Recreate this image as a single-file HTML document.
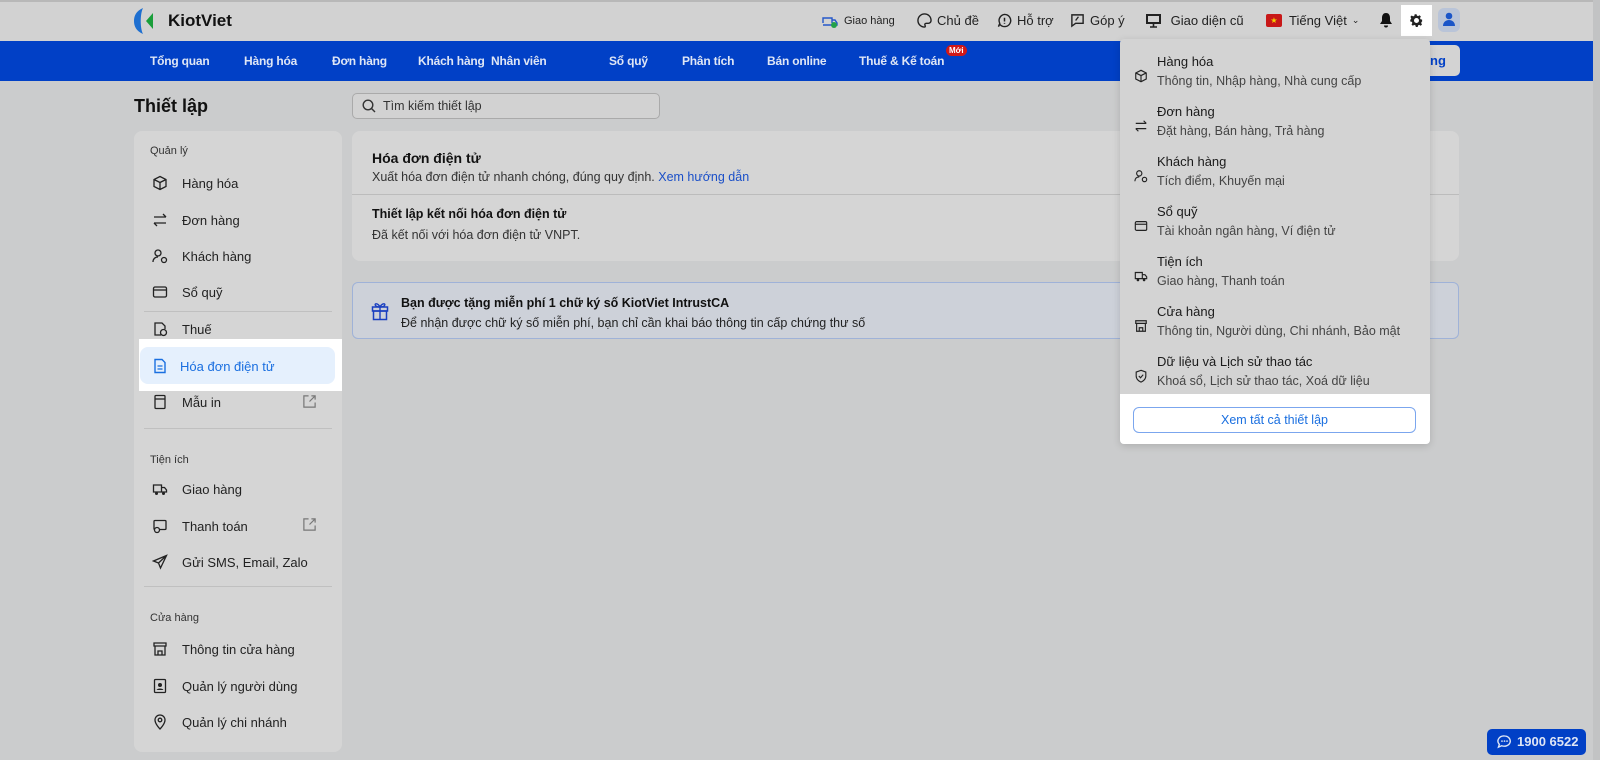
<!DOCTYPE html>
<html><head><meta charset="utf-8">
<style>
*{box-sizing:border-box;margin:0;padding:0}
body{width:1600px;height:760px;overflow:hidden;background:#cbcccd;font-family:"Liberation Sans",Arial,sans-serif;color:#1a1a1a;position:relative;font-size:13px}
.a{position:absolute}
.top{left:0;top:0;width:1600px;height:41px;background:#d2d2d2;border-top:2px solid #b8b8b8}
.nav{left:0;top:41px;width:1600px;height:40px;background:#0140c6}
.nav span{position:absolute;top:13px;color:#dfe6f5;font-weight:bold;font-size:12px;letter-spacing:-0.2px}
.hd{top:13px;font-size:13px;color:#222;display:flex;align-items:center;gap:5px}
.side{left:134px;top:131px;width:208px;height:621px;background:#d5d5d5;border-radius:8px}
.si{position:absolute;left:18px;font-size:13px;color:#222;display:flex;align-items:center;gap:14px}
.si svg{width:16px;height:16px}
.sec{position:absolute;left:16px;font-size:11px;color:#333}
.hr{position:absolute;left:10px;width:188px;height:1px;background:#c0c0c0}
.card{left:352px;top:131px;width:1107px;height:130px;background:#d5d5d5;border-radius:8px}
.dd{left:1120px;top:39px;width:310px;height:405px;background:#d3d3d3;border-radius:4px;box-shadow:0 2px 8px rgba(0,0,0,.15);overflow:hidden}
.di{position:absolute;left:37px;font-size:13px;color:#1a1a1a}
.di small{display:block;font-size:12.5px;color:#444;margin-top:5px}
.dic{position:absolute;left:14px;width:14px;height:14px}
</style></head><body>
<div class="a top"></div>
<svg class="a" style="left:133px;top:8px" width="30" height="26" viewBox="0 0 30 26"><path d="M10 0C3 3 1 8 1 13s2 10 9 13C7 20 7 6 10 0z" fill="#1e6fd0"/><path d="M13 13l7-8v16z" fill="#1a9e3a"/></svg>
<div class="a" style="left:168px;top:11px;font-size:17px;font-weight:bold;color:#111">KiotViet</div>
<div class="a hd" style="left:821px"><svg width="18" height="16" viewBox="0 0 18 16"><path d="M2 10V5h9v5M11 7h3l2 3v2H2" fill="none" stroke="#2458c9" stroke-width="1.4"/><circle cx="13" cy="12" r="3" fill="#23a04a"/></svg><span style="font-size:11px">Giao hàng</span></div>
<div class="a hd" style="left:917px"><svg width="15" height="15" viewBox="0 0 16 16"><path d="M8 1a7 7 0 100 14c1 0 1-1 .5-2s0-2 1.5-2h2a3 3 0 003-3C15 4 12 1 8 1z" fill="none" stroke="#222" stroke-width="1.5"/></svg>Chủ đề</div>
<div class="a hd" style="left:997px"><svg width="15" height="15" viewBox="0 0 16 16"><path d="M8 1.5a6.5 6.5 0 11-5 10.5L1.5 14.5 3 11A6.5 6.5 0 018 1.5z" fill="none" stroke="#222" stroke-width="1.5"/><path d="M8 5v4M8 10.5v1" stroke="#222" stroke-width="1.6"/></svg>Hỗ trợ</div>
<div class="a hd" style="left:1070px"><svg width="15" height="15" viewBox="0 0 16 16"><path d="M2 2h12v9H6l-4 3z" fill="none" stroke="#222" stroke-width="1.5"/><path d="M9 4l-3 4" stroke="#222" stroke-width="1.4"/></svg>Góp ý</div>
<div class="a hd" style="left:1145px"><svg width="17" height="15" viewBox="0 0 17 15"><rect x="1" y="1" width="15" height="10" fill="#222"/><rect x="3" y="3" width="11" height="6" fill="#d2d2d2"/><path d="M5 14h7M8.5 11v3" stroke="#222" stroke-width="1.6"/></svg>&nbsp;Giao diện cũ</div>
<div class="a" style="left:1266px;top:14px;width:16px;height:13px;background:#c81818;border-radius:2px;color:#f5d000;font-size:8px;text-align:center;line-height:13px">★</div>
<div class="a hd" style="left:1289px">Tiếng Việt <span style="font-size:9px">⌄</span></div>
<svg class="a" style="left:1379px;top:12px" width="14" height="16" viewBox="0 0 14 16"><path d="M7 1c3 0 4 2.5 4 5v3l2 3H1l2-3V6c0-2.5 1-5 4-5zM5 13.5h4a2 2 0 01-4 0z" fill="#111"/></svg>
<div class="a" style="left:1401px;top:5px;width:31px;height:31px;background:#fff"></div>
<svg class="a" style="left:1409px;top:13px" width="15" height="15" viewBox="0 0 24 24"><path d="M12 8a4 4 0 100 8 4 4 0 000-8zm9 5.5v-3l-2.6-.6-.8-1.9 1.4-2.3-2.1-2.1-2.3 1.4-1.9-.8L12.1 2h-3l-.6 2.6-1.9.8-2.3-1.4-2.1 2.1 1.4 2.3-.8 1.9L2 10.5v3l2.6.6.8 1.9-1.4 2.3 2.1 2.1 2.3-1.4 1.9.8.6 2.6h3l.6-2.6 1.9-.8 2.3 1.4 2.1-2.1-1.4-2.3.8-1.9z" fill="#222" fill-rule="evenodd"/></svg>
<div class="a" style="left:1438px;top:8px;width:22px;height:24px;background:#b9c4d8;border-radius:6px"></div>
<svg class="a" style="left:1443px;top:12px" width="12" height="15" viewBox="0 0 12 15"><circle cx="6" cy="4" r="3.3" fill="#1a55c8"/><path d="M0 14c0-4 3-6 6-6s6 2 6 6z" fill="#1a55c8"/></svg>
<div class="a nav">
<span style="left:150px">Tổng quan</span><span style="left:244px">Hàng hóa</span><span style="left:332px">Đơn hàng</span><span style="left:418px">Khách hàng</span><span style="left:491px">Nhân viên</span><span style="left:609px">Sổ quỹ</span><span style="left:682px">Phân tích</span><span style="left:767px">Bán online</span><span style="left:859px">Thuế &amp; Kế toán</span>
<div style="position:absolute;left:946px;top:4px;background:#d01818;color:#fff;font-size:8px;font-weight:bold;border-radius:7px;padding:1px 3px">Mới</div>
<div style="position:absolute;left:1420px;top:4px;width:40px;height:31px;background:#d3d3d3;border-radius:5px;color:#0140c6;font-weight:bold;font-size:13px;line-height:31px;padding-left:10px">ng</div>
</div>
<div class="a" style="left:134px;top:96px;font-size:18px;font-weight:bold;color:#111">Thiết lập</div>
<div class="a" style="left:352px;top:93px;width:308px;height:26px;border:1px solid #aaa;border-radius:5px;background:#d2d2d2"></div>
<svg class="a" style="left:362px;top:99px" width="14" height="14" viewBox="0 0 14 14"><circle cx="6" cy="6" r="4.8" fill="none" stroke="#333" stroke-width="1.4"/><path d="M9.5 9.5L13 13" stroke="#333" stroke-width="1.4"/></svg>
<div class="a" style="left:383px;top:99px;font-size:12.5px;color:#333">Tìm kiếm thiết lập</div>
<div class="a side">
<div class="sec" style="top:14px">Quản lý</div>
<div class="si" style="top:44px"><svg viewBox="0 0 16 16"><path d="M8 1.5l6 3v7l-6 3-6-3v-7zM2 4.5l6 3 6-3M8 7.5v7" fill="none" stroke="#222" stroke-width="1.3"/></svg>Hàng hóa</div>
<div class="si" style="top:81px"><svg viewBox="0 0 16 16"><path d="M2 5h12M11 2l3 3M14 11H2M5 14l-3-3" fill="none" stroke="#222" stroke-width="1.3"/></svg>Đơn hàng</div>
<div class="si" style="top:117px"><svg viewBox="0 0 16 16"><circle cx="6" cy="5" r="3" fill="none" stroke="#222" stroke-width="1.3"/><path d="M1 14c0-3 2-5 5-5" fill="none" stroke="#222" stroke-width="1.3"/><circle cx="12" cy="12" r="2.5" fill="none" stroke="#222" stroke-width="1.3"/></svg>Khách hàng</div>
<div class="si" style="top:153px"><svg viewBox="0 0 16 16"><rect x="1.5" y="3" width="13" height="10" rx="1.5" fill="none" stroke="#222" stroke-width="1.3"/><path d="M1.5 6h13" stroke="#222" stroke-width="1.3"/></svg>Sổ quỹ</div>
<div class="hr" style="top:180px"></div>
<div class="si" style="top:190px"><svg viewBox="0 0 16 16"><path d="M9 14H3V2h7l3 3v3" fill="none" stroke="#222" stroke-width="1.3"/><circle cx="11.5" cy="11.5" r="3" fill="none" stroke="#222" stroke-width="1.3"/></svg>Thuế</div>
<div class="si" style="top:263px"><svg viewBox="0 0 16 16"><rect x="3" y="1.5" width="10" height="13" rx="1" fill="none" stroke="#222" stroke-width="1.3"/><path d="M3 5h10" stroke="#222" stroke-width="1.3"/></svg>Mẫu in</div>
<svg style="position:absolute;left:168px;top:263px" width="15" height="15" viewBox="0 0 16 16"><path d="M7 2H2v12h12V9M10 2h4v4M14 2L8 8" fill="none" stroke="#777" stroke-width="1.3"/></svg>
<div class="hr" style="top:297px"></div>
<div class="sec" style="top:323px">Tiện ích</div>
<div class="si" style="top:350px"><svg viewBox="0 0 16 16"><path d="M1.5 4h8v7h-8zM9.5 6.5h3l2 2.5v2h-5" fill="none" stroke="#222" stroke-width="1.3"/><circle cx="4.5" cy="12.5" r="1.5" fill="#222"/><circle cx="11.5" cy="12.5" r="1.5" fill="#222"/></svg>Giao hàng</div>
<div class="si" style="top:387px"><svg viewBox="0 0 16 16"><rect x="2" y="2.5" width="12" height="9" rx="1" fill="none" stroke="#222" stroke-width="1.3"/><circle cx="5" cy="12" r="2.5" fill="#d5d5d5" stroke="#222" stroke-width="1.3"/></svg>Thanh toán</div>
<svg style="position:absolute;left:168px;top:386px" width="15" height="15" viewBox="0 0 16 16"><path d="M7 2H2v12h12V9M10 2h4v4M14 2L8 8" fill="none" stroke="#777" stroke-width="1.3"/></svg>
<div class="si" style="top:423px"><svg viewBox="0 0 16 16"><path d="M14.5 1.5L1.5 7l5 2 2 5zM6.5 9l8-7.5" fill="none" stroke="#222" stroke-width="1.3"/></svg>Gửi SMS, Email, Zalo</div>
<div class="hr" style="top:455px"></div>
<div class="sec" style="top:481px">Cửa hàng</div>
<div class="si" style="top:510px"><svg viewBox="0 0 16 16"><path d="M2 2h12v3H2zM3 5v9h10V5M6 14v-4h4v4" fill="none" stroke="#222" stroke-width="1.3"/></svg>Thông tin cửa hàng</div>
<div class="si" style="top:547px"><svg viewBox="0 0 16 16"><rect x="2.5" y="1.5" width="11" height="13" rx="1" fill="none" stroke="#222" stroke-width="1.3"/><circle cx="8" cy="7" r="2" fill="#222"/><path d="M4.5 12c1-2 6-2 7 0z" fill="#222"/></svg>Quản lý người dùng</div>
<div class="si" style="top:583px"><svg viewBox="0 0 16 16"><path d="M8 15s5-5 5-9a5 5 0 00-10 0c0 4 5 9 5 9z" fill="none" stroke="#222" stroke-width="1.3"/><circle cx="8" cy="6" r="1.8" fill="none" stroke="#222" stroke-width="1.3"/></svg>Quản lý chi nhánh</div>
</div>
<div class="a" style="left:139px;top:339px;width:203px;height:52px;background:#fff"></div>
<div class="a" style="left:140px;top:347px;width:195px;height:37px;background:#e5f0fd;border-radius:8px"></div>
<svg class="a" style="left:152px;top:358px" width="16" height="16" viewBox="0 0 16 16"><path d="M3 1.5h7l3 3v10H3z" fill="none" stroke="#1a6fe0" stroke-width="1.4"/><path d="M5.5 8h5M5.5 11h5" stroke="#1a6fe0" stroke-width="1.3"/></svg>
<div class="a" style="left:180px;top:359px;font-size:13px;color:#1a6fe0">Hóa đơn điện tử</div>
<div class="a card">
<div style="position:absolute;left:20px;top:19px;font-size:14px;font-weight:bold;color:#111">Hóa đơn điện tử</div>
<div style="position:absolute;left:20px;top:39px;font-size:12.5px;color:#333">Xuất hóa đơn điện tử nhanh chóng, đúng quy định. <span style="color:#1a4fc8">Xem hướng dẫn</span></div>
<div style="position:absolute;left:0;top:63px;width:100%;height:1px;background:#bcbcbc"></div>
<div style="position:absolute;left:20px;top:76px;font-size:12.5px;font-weight:bold;color:#111">Thiết lập kết nối hóa đơn điện tử</div>
<div style="position:absolute;left:20px;top:97px;font-size:12.5px;color:#333">Đã kết nối với hóa đơn điện tử VNPT.</div>
</div>
<div class="a" style="left:352px;top:282px;width:1107px;height:57px;background:#cdd1d9;border:1px solid #9fb2d8;border-radius:6px">
<svg style="position:absolute;left:18px;top:18px" width="18" height="20" viewBox="0 0 18 20"><rect x="1.5" y="6" width="15" height="4" fill="none" stroke="#1a3fc0" stroke-width="1.5"/><rect x="2.5" y="10" width="13" height="8.5" fill="none" stroke="#1a3fc0" stroke-width="1.5"/><path d="M9 6v12.5M9 6C7 2 3 2 4.5 4.5 5.5 6 9 6 9 6zm0 0c2-4 6-4 4.5-1.5C12.5 6 9 6 9 6z" fill="none" stroke="#1a3fc0" stroke-width="1.4"/></svg>
<div style="position:absolute;left:48px;top:13px;font-size:12.5px;font-weight:bold;color:#111">Bạn được tặng miễn phí 1 chữ ký số KiotViet IntrustCA</div>
<div style="position:absolute;left:48px;top:33px;font-size:12.5px;color:#222">Để nhận được chữ ký số miễn phí, bạn chỉ cần khai báo thông tin cấp chứng thư số</div>
</div>
<div class="a dd">
<svg class="dic" style="top:30px" viewBox="0 0 16 16"><path d="M8 1.5l6 3v7l-6 3-6-3v-7zM2 4.5l6 3 6-3M8 7.5v7" fill="none" stroke="#222" stroke-width="1.3"/></svg>
<div class="di" style="top:15px">Hàng hóa<small>Thông tin, Nhập hàng, Nhà cung cấp</small></div>
<svg class="dic" style="top:80px" viewBox="0 0 16 16"><path d="M2 5h12M11 2l3 3M14 11H2M5 14l-3-3" fill="none" stroke="#222" stroke-width="1.3"/></svg>
<div class="di" style="top:65px">Đơn hàng<small>Đặt hàng, Bán hàng, Trả hàng</small></div>
<svg class="dic" style="top:130px" viewBox="0 0 16 16"><circle cx="6" cy="5" r="3" fill="none" stroke="#222" stroke-width="1.3"/><path d="M1 14c0-3 2-5 5-5" fill="none" stroke="#222" stroke-width="1.3"/><circle cx="12" cy="12" r="2.5" fill="none" stroke="#222" stroke-width="1.3"/></svg>
<div class="di" style="top:115px">Khách hàng<small>Tích điểm, Khuyến mại</small></div>
<svg class="dic" style="top:180px" viewBox="0 0 16 16"><rect x="1.5" y="3" width="13" height="10" rx="1.5" fill="none" stroke="#222" stroke-width="1.3"/><path d="M1.5 6h13" stroke="#222" stroke-width="1.3"/></svg>
<div class="di" style="top:165px">Sổ quỹ<small>Tài khoản ngân hàng, Ví điện tử</small></div>
<svg class="dic" style="top:230px" viewBox="0 0 16 16"><path d="M1.5 4h8v7h-8zM9.5 6.5h3l2 2.5v2h-5" fill="none" stroke="#222" stroke-width="1.3"/><circle cx="4.5" cy="12.5" r="1.5" fill="#222"/><circle cx="11.5" cy="12.5" r="1.5" fill="#222"/></svg>
<div class="di" style="top:215px">Tiện ích<small>Giao hàng, Thanh toán</small></div>
<svg class="dic" style="top:280px" viewBox="0 0 16 16"><path d="M2 2h12v3H2zM3 5v9h10V5M6 14v-4h4v4" fill="none" stroke="#222" stroke-width="1.3"/></svg>
<div class="di" style="top:265px">Cửa hàng<small>Thông tin, Người dùng, Chi nhánh, Bảo mật</small></div>
<svg class="dic" style="top:330px" viewBox="0 0 16 16"><path d="M8 1.5l5.5 2v4.5c0 3.5-3 6-5.5 7-2.5-1-5.5-3.5-5.5-7V3.5z" fill="none" stroke="#222" stroke-width="1.3"/><path d="M5.5 8l2 2 3-3.5" fill="none" stroke="#222" stroke-width="1.3"/></svg>
<div class="di" style="top:315px">Dữ liệu và Lịch sử thao tác<small>Khoá sổ, Lịch sử thao tác, Xoá dữ liệu</small></div>
<div style="position:absolute;left:0;top:355px;width:310px;height:50px;background:#fff"></div>
<div style="position:absolute;left:13px;top:368px;width:283px;height:26px;border:1px solid #7ba6ee;border-radius:6px;text-align:center;line-height:24px;font-size:12.5px;color:#1a6fe0">Xem tất cả thiết lập</div>
</div>
<div class="a" style="left:1487px;top:729px;width:99px;height:26px;background:#0140c6;border-radius:5px;color:#dfe6f5;font-weight:bold;font-size:13px;line-height:26px;padding-left:30px">1900 6522</div>
<svg class="a" style="left:1497px;top:735px" width="15" height="14" viewBox="0 0 16 15"><path d="M8 1a6.5 5.5 0 11-3 10.5L1.5 13l1-3A6.5 5.5 0 018 1z" fill="none" stroke="#dfe6f5" stroke-width="1.5"/><circle cx="5.3" cy="6.5" r=".9" fill="#dfe6f5"/><circle cx="8" cy="6.5" r=".9" fill="#dfe6f5"/><circle cx="10.7" cy="6.5" r=".9" fill="#dfe6f5"/></svg>
<div class="a" style="left:1593px;top:0;width:7px;height:760px;background:#c2c3c4"></div>
</body></html>
